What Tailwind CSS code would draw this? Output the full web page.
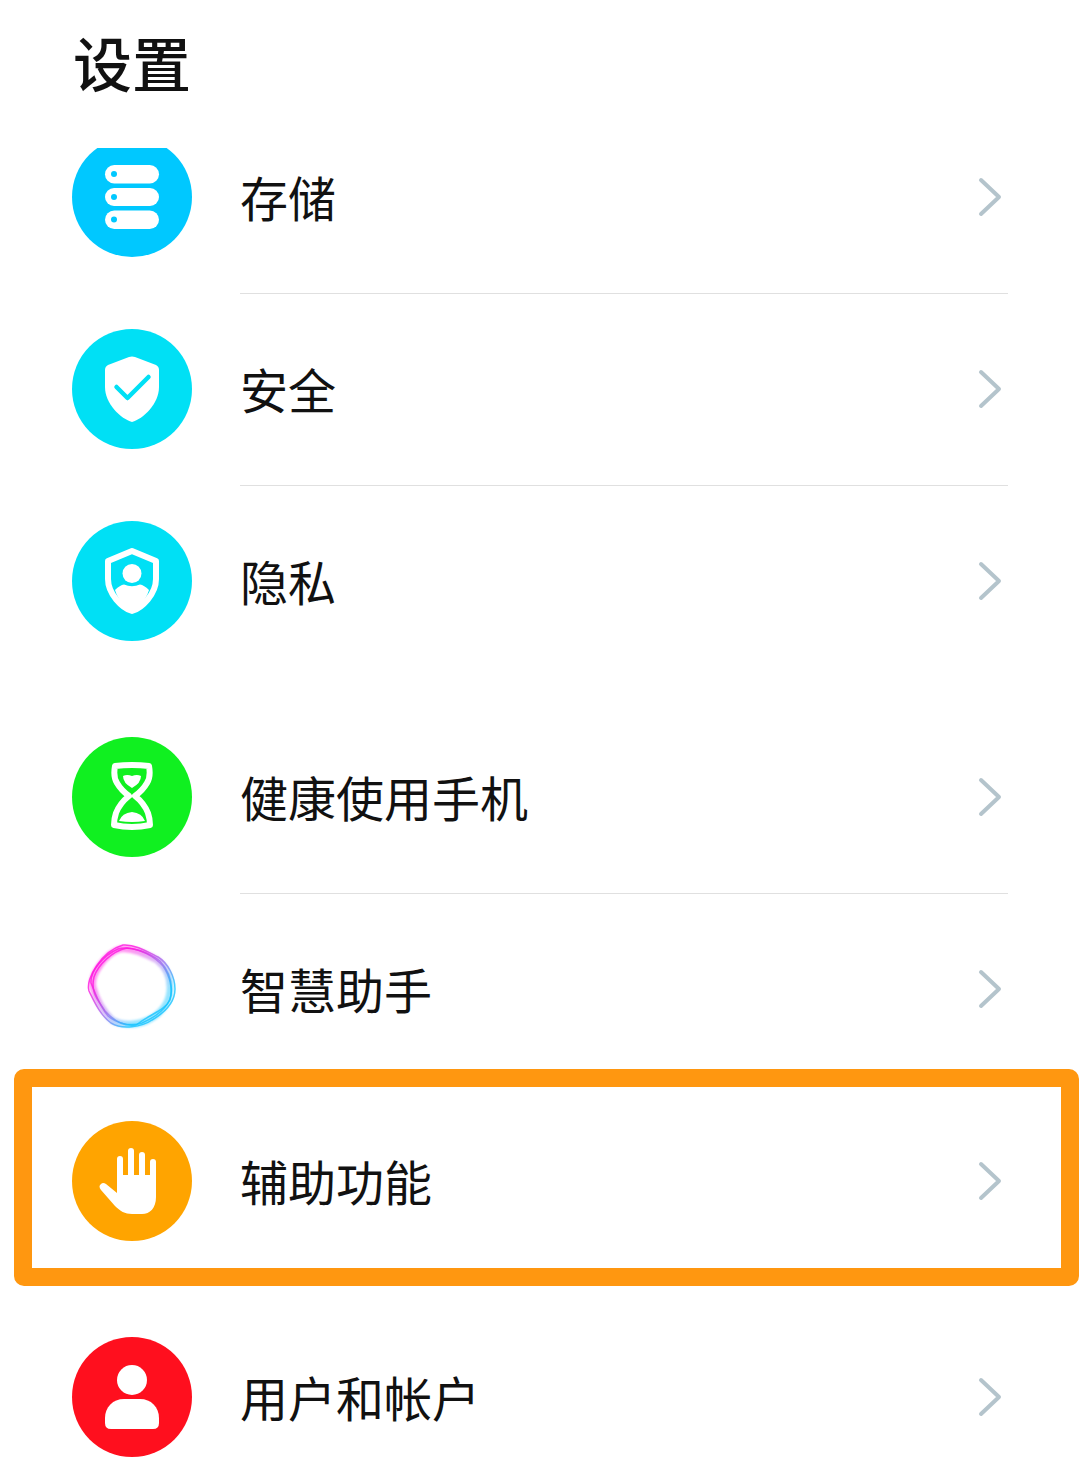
<!DOCTYPE html>
<html lang="zh-CN">
<head>
  <meta charset="UTF-8" />
  <meta name="viewport" content="width=device-width, initial-scale=1.0" />
  <title>设置</title>
  <script src="https://cdn.jsdelivr.net/npm/@tailwindcss/browser@4"></script>
</head>
<body class="bg-white text-[#111] font-['Noto_Sans_CJK_SC','Noto_Sans',sans-serif]">
  <div class="relative w-[1079px] h-[1475px] overflow-hidden bg-white">
    <header class="h-[148px] pl-[73px] pt-[21px]">
      <h1 class="text-[59px] leading-[82px] font-medium">设置</h1>
    </header>

    <div class="h-[1327px] overflow-hidden">
      <div class="-mt-[47px]">
        <!-- storage -->
        <div class="flex items-center h-[192px] pl-[72px]">
          <svg class="shrink-0" width="120" height="120" viewBox="0 0 120 120">
            <circle cx="60" cy="60" r="60" fill="#00c8ff"/>
            <rect x="33" y="28" width="54" height="18.500" rx="9.250" fill="#fff"/>
            <rect x="33" y="51" width="54" height="18" rx="9" fill="#fff"/>
            <rect x="33" y="73.500" width="54" height="18.500" rx="9.250" fill="#fff"/>
            <circle cx="42" cy="37" r="3" fill="#00c8ff"/>
            <circle cx="42" cy="60" r="3" fill="#00c8ff"/>
            <circle cx="42" cy="82.500" r="3" fill="#00c8ff"/>
          </svg>
          <div class="flex-1 flex items-center justify-between h-full ml-[48px] mr-[71px]">
            <span class="text-[48px] -mt-[3px]">存储</span>
            <svg class="mr-[6px]" width="24" height="40" viewBox="0 0 24 40"><path d="M3 3 L21 20 L3 37" fill="none" stroke="#b4c4cc" stroke-width="4" stroke-linecap="round" stroke-linejoin="round"/></svg>
          </div>
        </div>

        <!-- security -->
        <div class="flex items-center h-[192px] pl-[72px]">
          <svg class="shrink-0" width="120" height="120" viewBox="0 0 120 120">
            <circle cx="60" cy="60" r="60" fill="#00e0f5"/>
            <path d="M57 28 Q60 27 63 28 L84 36 Q87 37.500 87 41 V58 C87 75 71 90 60 93 C49 90 33 75 33 58 V41 Q33 37.500 36 36 Z" fill="#fff"/>
            <path d="M44.500 58 L55.500 69 L76.500 48" fill="none" stroke="#00e0f5" stroke-width="4.500" stroke-linecap="round" stroke-linejoin="round"/>
          </svg>
          <div class="flex-1 flex items-center justify-between h-full ml-[48px] mr-[71px] shadow-[inset_0_1px_0_#e0e0e0]">
            <span class="text-[48px] -mt-[3px]">安全</span>
            <svg class="mr-[6px]" width="24" height="40" viewBox="0 0 24 40"><path d="M3 3 L21 20 L3 37" fill="none" stroke="#b4c4cc" stroke-width="4" stroke-linecap="round" stroke-linejoin="round"/></svg>
          </div>
        </div>

        <!-- privacy -->
        <div class="flex items-center h-[192px] pl-[72px]">
          <svg class="shrink-0" width="120" height="120" viewBox="0 0 120 120">
            <circle cx="60" cy="60" r="60" fill="#00e0f5"/>
            <path d="M60 30 L84 40 V58 C84 73 70 87 60 90 C50 87 36 73 36 58 V40 Z" fill="none" stroke="#fff" stroke-width="6" stroke-linejoin="round"/>
            <circle cx="60" cy="52.500" r="9.500" fill="#fff"/>
            <path d="M43 69 Q48 64 52 63.500 Q60 67 68 63.500 Q72 64 77 69 C74 79 66 88 60 91 C54 88 46 79 43 69 Z" fill="#fff"/>
          </svg>
          <div class="flex-1 flex items-center justify-between h-full ml-[48px] mr-[71px] shadow-[inset_0_1px_0_#e0e0e0]">
            <span class="text-[48px] -mt-[3px]">隐私</span>
            <svg class="mr-[6px]" width="24" height="40" viewBox="0 0 24 40"><path d="M3 3 L21 20 L3 37" fill="none" stroke="#b4c4cc" stroke-width="4" stroke-linecap="round" stroke-linejoin="round"/></svg>
          </div>
        </div>

        <!-- digital wellbeing -->
        <div class="flex items-center h-[192px] pl-[72px] mt-[24px]">
          <svg class="shrink-0" width="120" height="120" viewBox="0 0 120 120">
            <circle cx="60" cy="60" r="60" fill="#10f020"/>
            <path d="M43 29 Q60 27 77 29 Q79 40 75 46 Q71 53 63 59 Q72 66 76 76 Q78 82 78 88 Q60 92 42 88 Q42 82 44 76 Q48 66 57 59 Q49 53 45 46 Q41 40 43 29 Z" fill="none" stroke="#fff" stroke-width="6" stroke-linejoin="round"/>
            <path d="M51 39 Q55 37 60 39 Q65 37 69 39 Q69 46 60 51 Q51 46 51 39 Z" fill="#fff"/>
            <path d="M47 84 Q50 76 60 75 Q70 76 73 84 Q60 86 47 84 Z" fill="#fff"/>
          </svg>
          <div class="flex-1 flex items-center justify-between h-full ml-[48px] mr-[71px]">
            <span class="text-[48px] -mt-[3px]">健康使用手机</span>
            <svg class="mr-[6px]" width="24" height="40" viewBox="0 0 24 40"><path d="M3 3 L21 20 L3 37" fill="none" stroke="#b4c4cc" stroke-width="4" stroke-linecap="round" stroke-linejoin="round"/></svg>
          </div>
        </div>

        <!-- assistant -->
        <div class="flex items-center h-[192px] pl-[72px]">
          <svg class="shrink-0" width="120" height="120" viewBox="0 0 120 120">
            <defs>
              <linearGradient id="ring" gradientUnits="userSpaceOnUse" x1="28" y1="24" x2="90" y2="92">
                <stop offset="0.200" stop-color="#ff18e0"/>
                <stop offset="0.550" stop-color="#9a78f0"/>
                <stop offset="0.800" stop-color="#18c4ff"/>
              </linearGradient>
            </defs>
            <g fill="none" stroke="url(#ring)">
              <path class="blur-[1px]" d="M48 20 C60 18 74 25 85 31 C95 39 99 50 98 62 C97 74 89 85 76 91 C66 96 50 97 40 91 C31 82 24 70 21 58 C18 46 34 24 48 20 Z" stroke-width="7" opacity="0.450"/>
              <path d="M51 16 C63 15 76 23 86 28 C96 34 103 48 103 60 C103 74 92 84 80 91 C70 98 50 101 39 94 C28 86 22 72 17 62 C13 50 30 22 51 16 Z" stroke-width="1.500" opacity="0.800"/>
              <path d="M46 20 C58 16 78 24 88 32 C97 42 101 52 99 66 C97 78 84 88 70 94 C58 98 44 94 36 87 C28 78 24 66 19 54 C18 42 32 26 46 20 Z" stroke-width="1.500" opacity="0.800"/>
              <path d="M55 19 C68 20 82 27 91 37 C98 47 101 60 98 71 C92 82 80 84 64 96 C52 98 42 92 33 82 C27 72 18 64 22 48 C26 36 40 22 55 19 Z" stroke-width="1.500" opacity="0.800"/>
            </g>
          </svg>
          <div class="flex-1 flex items-center justify-between h-full ml-[48px] mr-[71px] shadow-[inset_0_1px_0_#e0e0e0]">
            <span class="text-[48px] -mt-[3px]">智慧助手</span>
            <svg class="mr-[6px]" width="24" height="40" viewBox="0 0 24 40"><path d="M3 3 L21 20 L3 37" fill="none" stroke="#b4c4cc" stroke-width="4" stroke-linecap="round" stroke-linejoin="round"/></svg>
          </div>
        </div>

        <!-- accessibility -->
        <div class="flex items-center h-[192px] pl-[72px]">
          <svg class="shrink-0" width="120" height="120" viewBox="0 0 120 120">
            <circle cx="60" cy="60" r="60" fill="#ffa400"/>
            <g stroke="#fff" stroke-width="6" stroke-linecap="round">
              <path d="M48 38 V62"/>
              <path d="M59 30 V62"/>
              <path d="M70 34 V62"/>
              <path d="M81 41 V62"/>
            </g>
            <path d="M45 54 H84 V76 C84 87 78 93 70 93 H60 C53 93 48 90 43 85 L29 69 Q26 65 29 63 Q31 61 34 63 L45 72 Z" fill="#fff"/>
          </svg>
          <div class="flex-1 flex items-center justify-between h-full ml-[48px] mr-[71px]">
            <span class="text-[48px] -mt-[3px]">辅助功能</span>
            <svg class="mr-[6px]" width="24" height="40" viewBox="0 0 24 40"><path d="M3 3 L21 20 L3 37" fill="none" stroke="#b4c4cc" stroke-width="4" stroke-linecap="round" stroke-linejoin="round"/></svg>
          </div>
        </div>

        <!-- users and accounts -->
        <div class="flex items-center h-[192px] pl-[72px] mt-[24px]">
          <svg class="shrink-0" width="120" height="120" viewBox="0 0 120 120">
            <circle cx="60" cy="60" r="60" fill="#ff0f1e"/>
            <circle cx="60" cy="43" r="15" fill="#fff"/>
            <path d="M52 62 H68 C79 62 87 70 87 81 V86 Q87 92 81 92 H39 Q33 92 33 86 V81 C33 70 41 62 52 62 Z" fill="#fff"/>
          </svg>
          <div class="flex-1 flex items-center justify-between h-full ml-[48px] mr-[71px]">
            <span class="text-[48px] -mt-[3px]">用户和帐户</span>
            <svg class="mr-[6px]" width="24" height="40" viewBox="0 0 24 40"><path d="M3 3 L21 20 L3 37" fill="none" stroke="#b4c4cc" stroke-width="4" stroke-linecap="round" stroke-linejoin="round"/></svg>
          </div>
        </div>
      </div>
    </div>

    <!-- highlight round the accessibility row -->
    <div class="absolute left-[14px] top-[1069px] w-[1065px] h-[217px] border-[18px] border-[#ff9710] rounded-[10px]"></div>
  </div>
</body>
</html>
